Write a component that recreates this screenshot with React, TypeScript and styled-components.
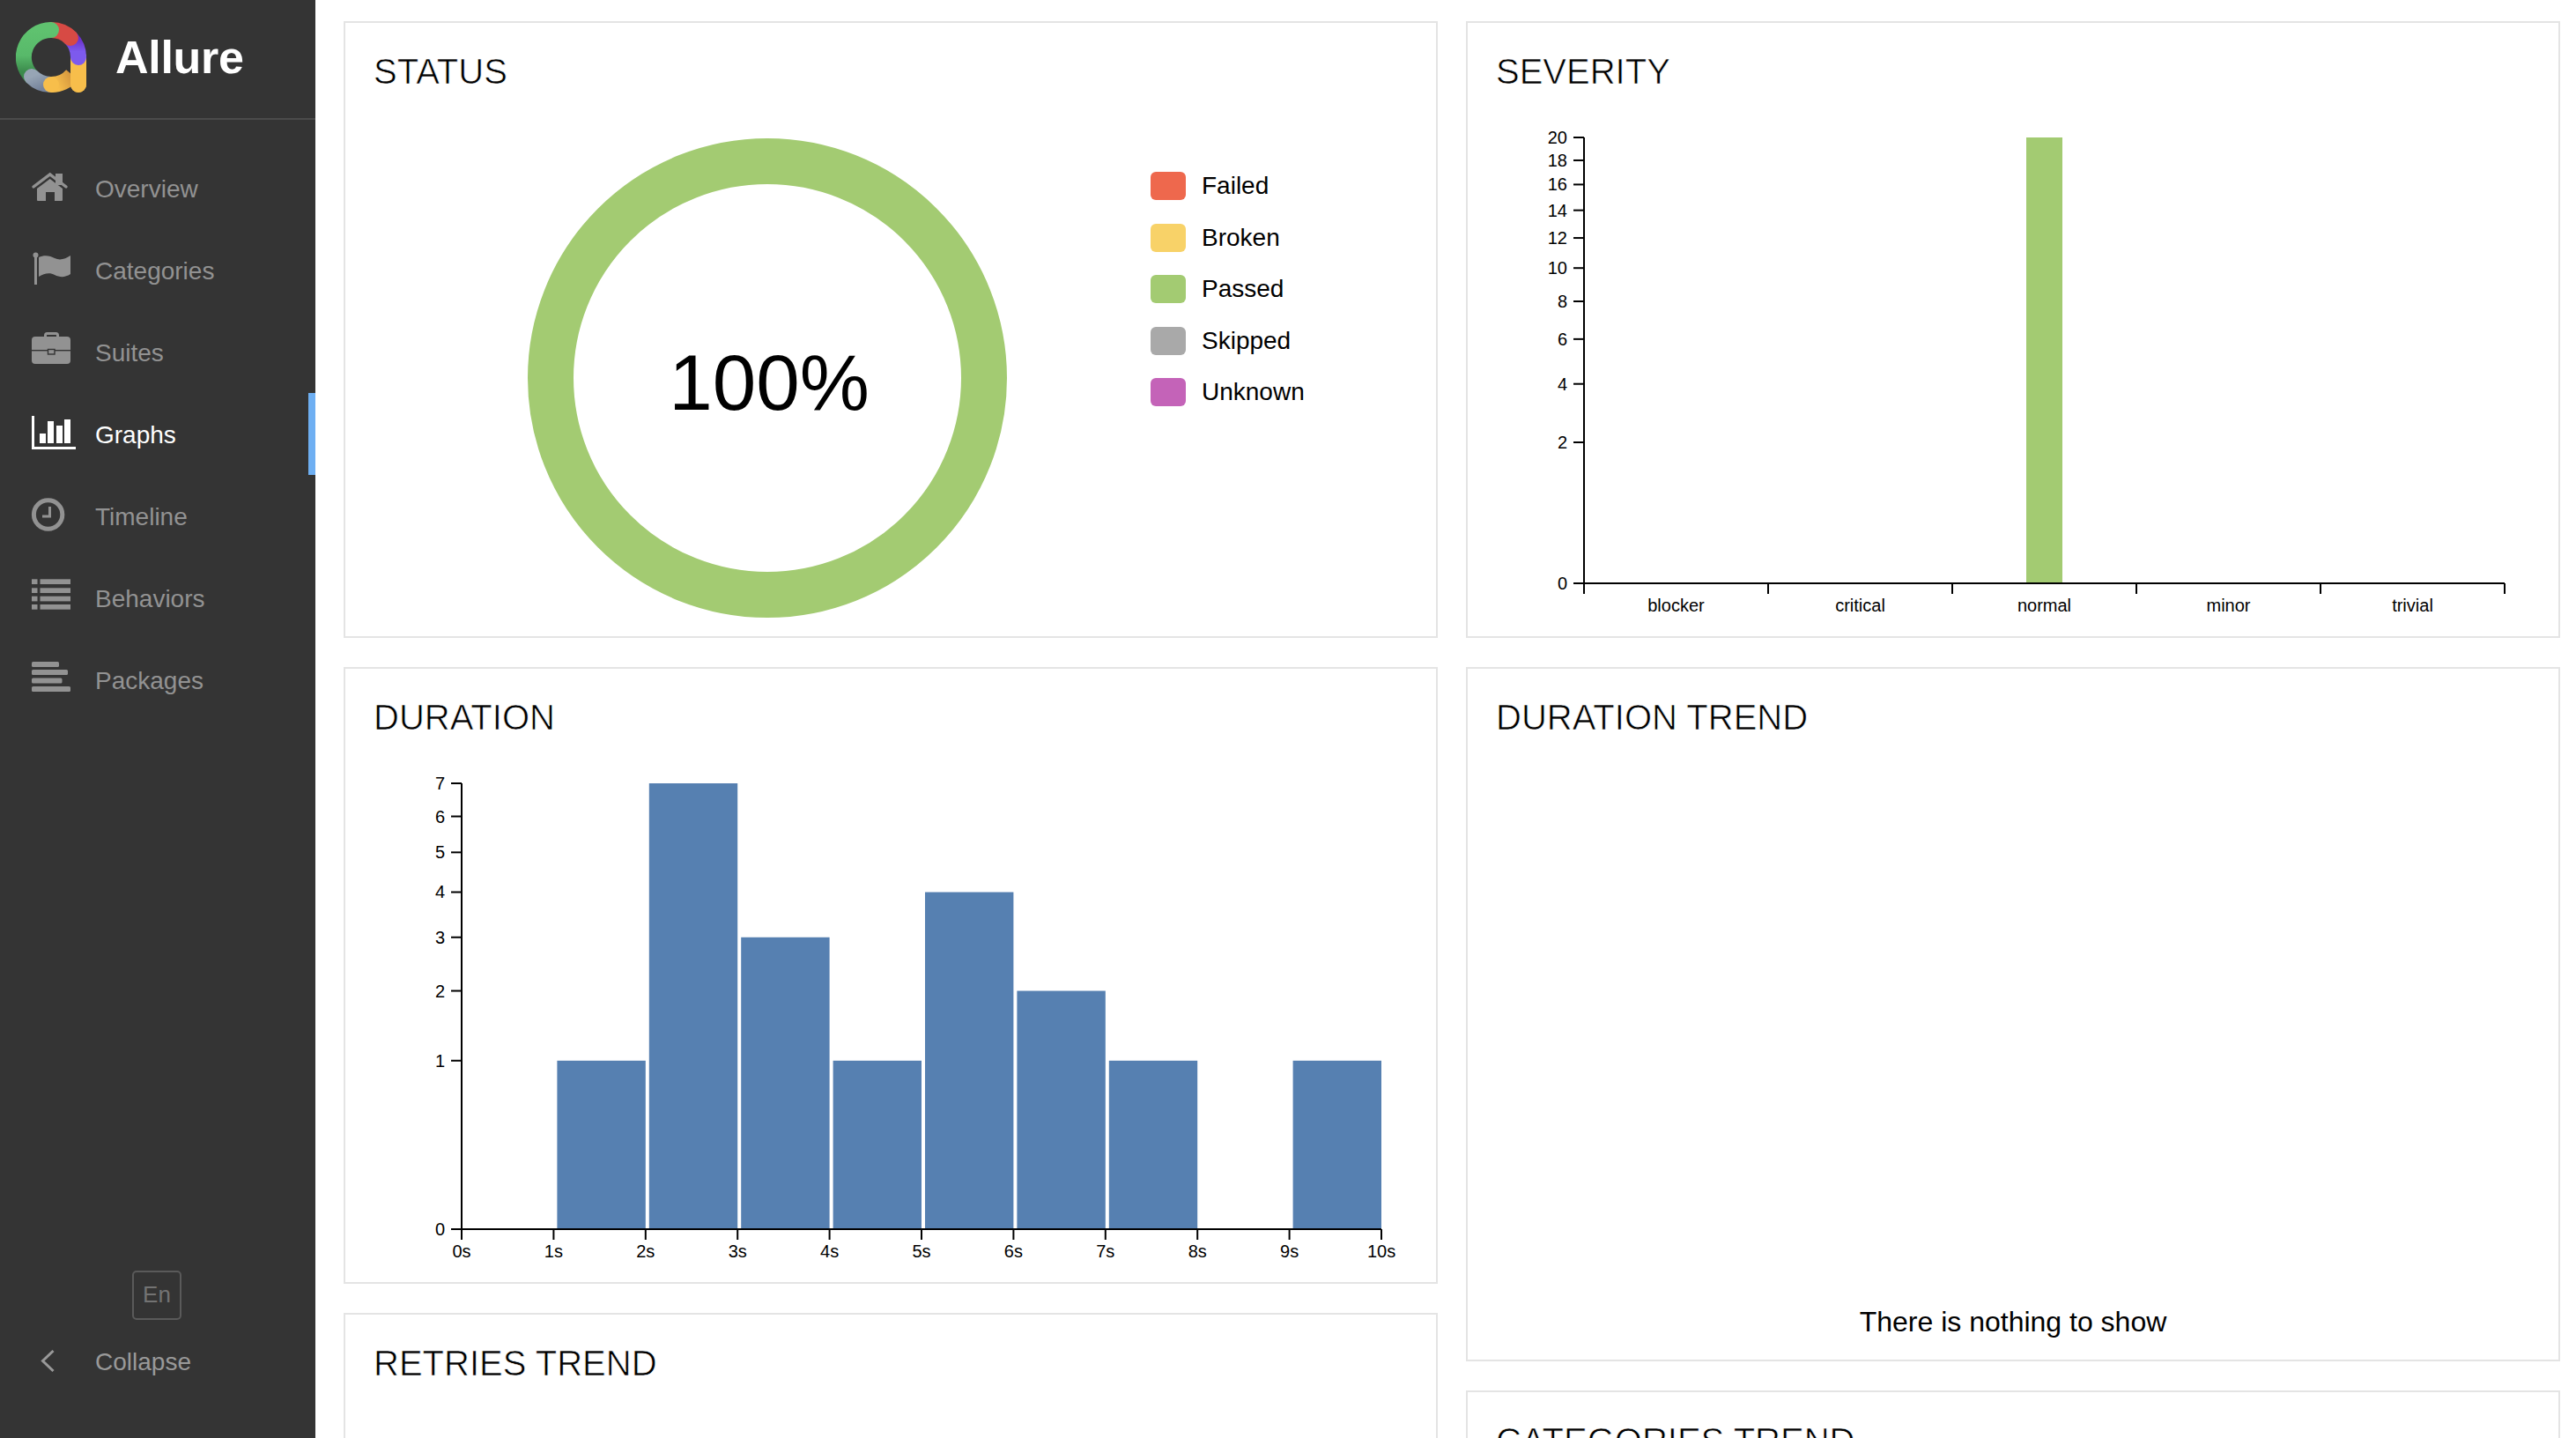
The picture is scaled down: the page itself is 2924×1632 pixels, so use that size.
import React from "react";
import styled, { createGlobalStyle } from "styled-components";

const Global = createGlobalStyle`
  html, body { margin: 0; height: 100%; overflow: hidden; background: #fff; }
  body { font-family: "Liberation Sans", Arial, sans-serif; color: #000; }
  #root { height: 100%; }
  * { box-sizing: border-box; }
`;

const Shell = styled.div`display: flex; height: 1632px; overflow: hidden;`;
const Sidebar = styled.aside`
  width: 358px; flex: none; background: #343434; display: flex; flex-direction: column;
`;
const Brand = styled.div`
  height: 136px; border-bottom: 2px solid #4b4b4b; display: flex; align-items: center;
  padding: 0 0 4px 18px; gap: 33px;
`;
const BrandName = styled.span`font-size: 52px; font-weight: 700; color: #fff; line-height: 1; letter-spacing: -0.3px;`;
const Nav = styled.nav`padding-top: 31px; display: flex; flex-direction: column;`;
const NavItem = styled.div<{ $active?: boolean }>`
  height: 93px; display: flex; align-items: center; padding-left: 36px;
  border-right: 8px solid ${(p) => (p.$active ? "#6eaff2" : "transparent")};
  color: ${(p) => (p.$active ? "#fff" : "#929292")};
  font-size: 28px;
`;
const NavLabel = styled.span`margin-top: 2px;`;
const IconBox = styled.svg`width: 72px; height: 43px; flex: none; overflow: visible; display: block;`;
const Footer = styled.div`margin-top: auto; padding-bottom: 41px; display: flex; flex-direction: column;`;
const LangButton = styled.div`
  width: 56px; height: 56px; margin-left: 150px; border: 2px solid #5a5a5a; border-radius: 5px;
  color: #737373; font-size: 26px; display: flex; align-items: center; justify-content: center;
  padding-bottom: 2px;
`;
const CollapseRow = styled(NavItem)`color: #999;`;

const Main = styled.main`
  flex: 1; display: flex; gap: 32px; padding: 24px 18px 0 32px; align-items: flex-start; overflow: hidden; height: 1632px;
`;
const Column = styled.div`flex: 1; min-width: 0; display: flex; flex-direction: column; gap: 33px;`;
const Card = styled.section<{ $h: number }>`
  height: ${(p) => p.$h}px; flex: none; border: 2px solid #e4e4e4; background: #fff; display: flex; flex-direction: column;
`;
const Title = styled.h2`
  margin: 0; height: 110px; line-height: 110px; padding-left: 32px; flex: none;
  font-weight: 400; font-size: 40px; color: #000;
  -webkit-text-stroke: 0.7px #fff;
  paint-order: fill stroke;
  text-transform: uppercase; white-space: nowrap;
`;
const ChartSvg = styled.svg`
  display: block; width: 1238px; height: 586px; overflow: visible;
  font-family: "Liberation Sans", Arial, sans-serif;
  text { font-size: 20px; fill: #000; }
`;
const StatusBody = styled.div`display: flex; align-items: flex-start;`;
const Donut = styled.svg`
  width: 544px; height: 544px; margin: 21px 0 0 207px; flex: none; display: block;
  font-family: "Liberation Sans", Arial, sans-serif;
`;
const Legend = styled.ul`
  list-style: none; margin: 59px 0 0 163px; padding: 0; display: flex; flex-direction: column; gap: 26.6px;
`;
const LegendRow = styled.li`display: flex; align-items: center; height: 32px; gap: 18px; font-size: 28px;`;
const Swatch = styled.span<{ $c: string }>`width: 40px; height: 32px; border-radius: 6px; background: ${(p) => p.$c};`;
const Empty = styled.div`
  margin-top: auto; padding-bottom: 25px; text-align: center; font-size: 32px; line-height: 36px;
`;

const Logo = () => (
  <svg width="80" height="80" viewBox="18 24 80 80" style={{ flex: "none" }}>
    <defs>
      <linearGradient id="lgGreen" x1="0" y1="0" x2="0" y2="1">
        <stop offset="0" stopColor="#5fc26f" />
        <stop offset="0.55" stopColor="#58b96a" />
        <stop offset="0.9" stopColor="#3b8a4c" />
      </linearGradient>
      <linearGradient id="lgPurple" x1="0" y1="0" x2="0" y2="1">
        <stop offset="0" stopColor="#6a2cc9" />
        <stop offset="0.7" stopColor="#7d5aed" />
      </linearGradient>
      <linearGradient id="lgGray" x1="0" y1="0" x2="1" y2="1">
        <stop offset="0" stopColor="#97a5b5" />
        <stop offset="1" stopColor="#76849c" />
      </linearGradient>
      <linearGradient id="lgYellow" gradientUnits="userSpaceOnUse" x1="58" y1="95" x2="82" y2="84">
        <stop offset="0.2" stopColor="#f7be4b" />
        <stop offset="1" stopColor="#d2943d" />
      </linearGradient>
    </defs>
    <g fill="none" strokeWidth="18" strokeLinecap="round">
      <path d="M89 64V95" stroke="#f7be4b" />
      <path d="M80 42A31 31 0 0 1 89 64" stroke="url(#lgPurple)" />
      <path d="M58 33A31 31 0 0 1 80 42" stroke="#d74a44" />
      <path d="M36 86A31 31 0 0 1 58 33" stroke="url(#lgGreen)" />
      <path d="M36 86A31 31 0 0 0 58 95" stroke="url(#lgGray)" />
      <path d="M58 95A31 31 0 0 0 82 84" stroke="url(#lgYellow)" strokeLinecap="butt" />
      <circle cx="58" cy="95" r="9" fill="#f7be4b" stroke="none" />
      <path d="M89 76V95" stroke="#f7be4b" strokeLinecap="butt" />
      <circle cx="89" cy="95" r="9" fill="#f7be4b" stroke="none" />
    </g>
  </svg>
);

const HomeIcon = () => (
  <IconBox viewBox="0 0 72 43" fill="currentColor">
    <path d="M27 5h8v13h-8z" />
    <path d="M2 20L20.7 6l18.3 14" fill="none" stroke="currentColor" strokeWidth="3.4" strokeLinecap="round" />
    <path d="M6 22L20.7 11 35 22V35a1 1 0 0 1-1 1H26V26H16V36H7a1 1 0 0 1-1-1z" />
  </IconBox>
);
const FlagIcon = () => (
  <IconBox viewBox="0 0 72 43" fill="currentColor">
    <circle cx="4.5" cy="4.5" r="3" />
    <rect x="3" y="4" width="3" height="34" />
    <path d="M8 7C14 4 21 5 26 8c6 3 12 1 18-3V26c-6 4-12 4-18 1-5-3-12-2-18 2z" />
  </IconBox>
);
const CaseIcon = () => (
  <IconBox viewBox="0 0 72 43" fill="currentColor">
    <rect x="15.5" y="0.5" width="14" height="8" rx="2" fill="none" stroke="currentColor" strokeWidth="3" />
    <rect x="0" y="4" width="44" height="31" rx="4" />
    <rect x="0" y="19" width="44" height="1.4" fill="#343434" />
    <rect x="18.5" y="18.5" width="7.5" height="5.5" fill="currentColor" stroke="#343434" strokeWidth="1.4" />
  </IconBox>
);
const ChartIcon = () => (
  <IconBox viewBox="0 0 72 43" fill="currentColor">
    <path d="M0 1h3v35h47v3H0z" />
    <rect x="9" y="21" width="7" height="11" />
    <rect x="18" y="7" width="7" height="25" />
    <rect x="28" y="12" width="7" height="20" />
    <rect x="37" y="5" width="7" height="27" />
  </IconBox>
);
const ClockIcon = () => (
  <IconBox viewBox="0 0 72 43">
    <circle cx="18.6" cy="20" r="16.2" fill="none" stroke="currentColor" strokeWidth="5" />
    <path d="M20.5 11V22H12" fill="none" stroke="currentColor" strokeWidth="3" />
  </IconBox>
);
const ListIcon = () => (
  <IconBox viewBox="0 0 72 43" fill="currentColor">
    {[0.3, 10.3, 19.7, 29].map((y) => (
      <React.Fragment key={y}>
        <rect x="0" y={y} width="6.5" height="5.7" />
        <rect x="9.5" y={y} width="34.5" height="5.7" />
      </React.Fragment>
    ))}
  </IconBox>
);
const PackIcon = () => (
  <IconBox viewBox="0 0 72 43" fill="currentColor">
    {[[1, 31], [10, 41], [19.5, 34.5], [29, 44]].map(([y, w]) => (
      <rect key={y} x="0" y={y} width={w} height="6" rx="1.5" />
    ))}
  </IconBox>
);
const ChevronIcon = () => (
  <IconBox viewBox="0 0 72 43">
    <path d="M24.5 10L12.5 21.5 24.5 33" fill="none" stroke="#999" strokeWidth="3" />
  </IconBox>
);

const NAV = [
  { label: "Overview", Icon: HomeIcon },
  { label: "Categories", Icon: FlagIcon },
  { label: "Suites", Icon: CaseIcon },
  { label: "Graphs", Icon: ChartIcon, active: true },
  { label: "Timeline", Icon: ClockIcon },
  { label: "Behaviors", Icon: ListIcon },
  { label: "Packages", Icon: PackIcon },
];

const GREEN = "#a3cb72";
const BLUE = "#5680b1";
const LEGEND = [
  ["Failed", "#ee684d"],
  ["Broken", "#f8d268"],
  ["Passed", GREEN],
  ["Skipped", "#a9a9a9"],
  ["Unknown", "#c463b8"],
];

const SEVERITY_TICKS = [0, 2, 4, 6, 8, 10, 12, 14, 16, 18, 20];
const SEVERITY = ["blocker", "critical", "normal", "minor", "trivial"];

const SeverityChart = () => {
  const ox = 132, base = 526, h = 506, band = 209;
  const y = (v: number) => base - h * Math.sqrt(v / 20);
  return (
    <ChartSvg viewBox="0 0 1238 586">
      <rect x={634} y={y(20)} width={41} height={h} fill={GREEN} />
      <g stroke="#000" strokeWidth="2" fill="none">
        <path d={`M${ox} ${y(20)}V${base}H${ox + band * 5}`} />
        {SEVERITY_TICKS.map((t) => <path key={t} d={`M${ox - 12} ${y(t)}H${ox}`} />)}
        {[0, 1, 2, 3, 4, 5].map((i) => <path key={i} d={`M${ox + band * i} ${base}v12`} />)}
      </g>
      {SEVERITY_TICKS.map((t) => (
        <text key={t} x={ox - 19} y={y(t) + 7} textAnchor="end">{t}</text>
      ))}
      {SEVERITY.map((s, i) => (
        <text key={s} x={ox + band * i + band / 2} y={558} textAnchor="middle">{s}</text>
      ))}
    </ChartSvg>
  );
};

const DURATION = [0, 1, 7, 3, 1, 4, 2, 1, 0, 1];
const DurationChart = () => {
  const ox = 132, base = 526, h = 506, step = 104.4;
  const y = (v: number) => base - h * Math.sqrt(v / 7);
  return (
    <ChartSvg viewBox="0 0 1238 586">
      {DURATION.map((v, i) =>
        v ? <rect key={i} x={ox + step * i + 4} y={y(v)} width={100.4} height={base - y(v)} fill={BLUE} /> : null
      )}
      <g stroke="#000" strokeWidth="2" fill="none">
        <path d={`M${ox} ${y(7)}V${base}H${ox + step * 10}`} />
        {[0, 1, 2, 3, 4, 5, 6, 7].map((t) => <path key={t} d={`M${ox - 12} ${y(t)}H${ox}`} />)}
        {DURATION.concat(0).map((_, i) => <path key={i} d={`M${ox + step * i} ${base}v12`} />)}
      </g>
      {[0, 1, 2, 3, 4, 5, 6, 7].map((t) => (
        <text key={t} x={ox - 19} y={y(t) + 7} textAnchor="end">{t}</text>
      ))}
      {DURATION.concat(0).map((_, i) => (
        <text key={i} x={ox + step * i} y={558} textAnchor="middle">{i}s</text>
      ))}
    </ChartSvg>
  );
};

export default function App() {
  return (
    <Shell>
      <Global />
      <Sidebar>
        <Brand>
          <Logo />
          <BrandName>Allure</BrandName>
        </Brand>
        <Nav>
          {NAV.map(({ label, Icon, active }) => (
            <NavItem key={label} $active={active}>
              <Icon />
              <NavLabel>{label}</NavLabel>
            </NavItem>
          ))}
        </Nav>
        <Footer>
          <LangButton>En</LangButton>
          <CollapseRow>
            <ChevronIcon />
            <NavLabel>Collapse</NavLabel>
          </CollapseRow>
        </Footer>
      </Sidebar>
      <Main>
        <Column>
          <Card $h={700}>
            <Title>Status</Title>
            <StatusBody>
              <Donut viewBox="0 0 544 544">
                <circle cx="272" cy="272" r="246" fill="none" stroke={GREEN} strokeWidth="52" />
                <text x="274" y="308" textAnchor="middle" fontSize="89" fill="#000">100%</text>
              </Donut>
              <Legend>
                {LEGEND.map(([name, c]) => (
                  <LegendRow key={name}>
                    <Swatch $c={c} />
                    {name}
                  </LegendRow>
                ))}
              </Legend>
            </StatusBody>
          </Card>
          <Card $h={700}>
            <Title>Duration</Title>
            <DurationChart />
          </Card>
          <Card $h={700}>
            <Title>Retries trend</Title>
          </Card>
        </Column>
        <Column>
          <Card $h={700}>
            <Title>Severity</Title>
            <SeverityChart />
          </Card>
          <Card $h={788}>
            <Title>Duration trend</Title>
            <Empty>There is nothing to show</Empty>
          </Card>
          <Card $h={700}>
            <Title>Categories trend</Title>
          </Card>
        </Column>
      </Main>
    </Shell>
  );
}
